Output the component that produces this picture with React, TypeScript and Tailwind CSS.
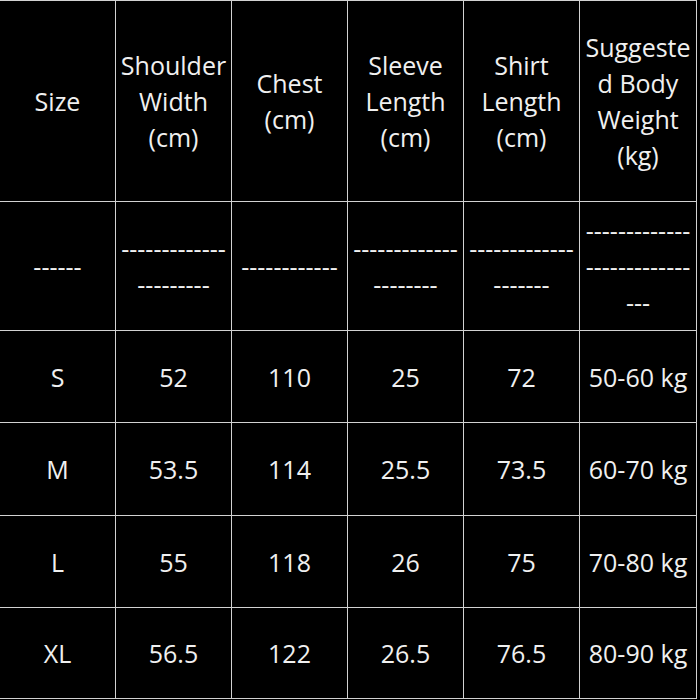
const header: string[][] = [
  ["Size"],
  ["Shoulder", "Width", "(cm)"],
  ["Chest", "(cm)"],
  ["Sleeve", "Length", "(cm)"],
  ["Shirt", "Length", "(cm)"],
  ["Suggeste", "d Body", "Weight", "(kg)"],
];

const dashes: string[][] = [
  ["------"],
  ["-------------", "---------"],
  ["------------"],
  ["-------------", "--------"],
  ["-------------", "-------"],
  ["-------------", "-------------", "---"],
];

const rows: string[][] = [
  ["S", "52", "110", "25", "72", "50-60 kg"],
  ["M", "53.5", "114", "25.5", "73.5", "60-70 kg"],
  ["L", "55", "118", "26", "75", "70-80 kg"],
  ["XL", "56.5", "122", "26.5", "76.5", "80-90 kg"],
];

function Cell({ lines }: { lines: string[] }) {
  return (
    <div className="flex flex-col items-center justify-center bg-black text-center whitespace-nowrap">
      {lines.map((l, i) => (
        <span key={i}>{l}</span>
      ))}
    </div>
  );
}

export default function App() {
  return (
    <div className="h-[700px] w-[700px] overflow-hidden bg-black">
      <div
        className="grid h-[699px] w-[697px] grid-cols-[115px_115px_115px_115px_115px_116px] grid-rows-[200px_128px_91px_92px_91px_90px] gap-px bg-[#d2d2d2] pt-px pr-px pb-px text-[25px] leading-[36px] text-[#f0f0f0]"
        style={{ fontFamily: '"Open Sans", sans-serif' }}
      >
        {header.map((h, i) => (
          <Cell key={"h" + i} lines={h} />
        ))}
        {dashes.map((d, i) => (
          <Cell key={"d" + i} lines={d} />
        ))}
        {rows.map((r, ri) =>
          r.map((c, ci) => <Cell key={ri + "-" + ci} lines={[c]} />)
        )}
      </div>
    </div>
  );
}
